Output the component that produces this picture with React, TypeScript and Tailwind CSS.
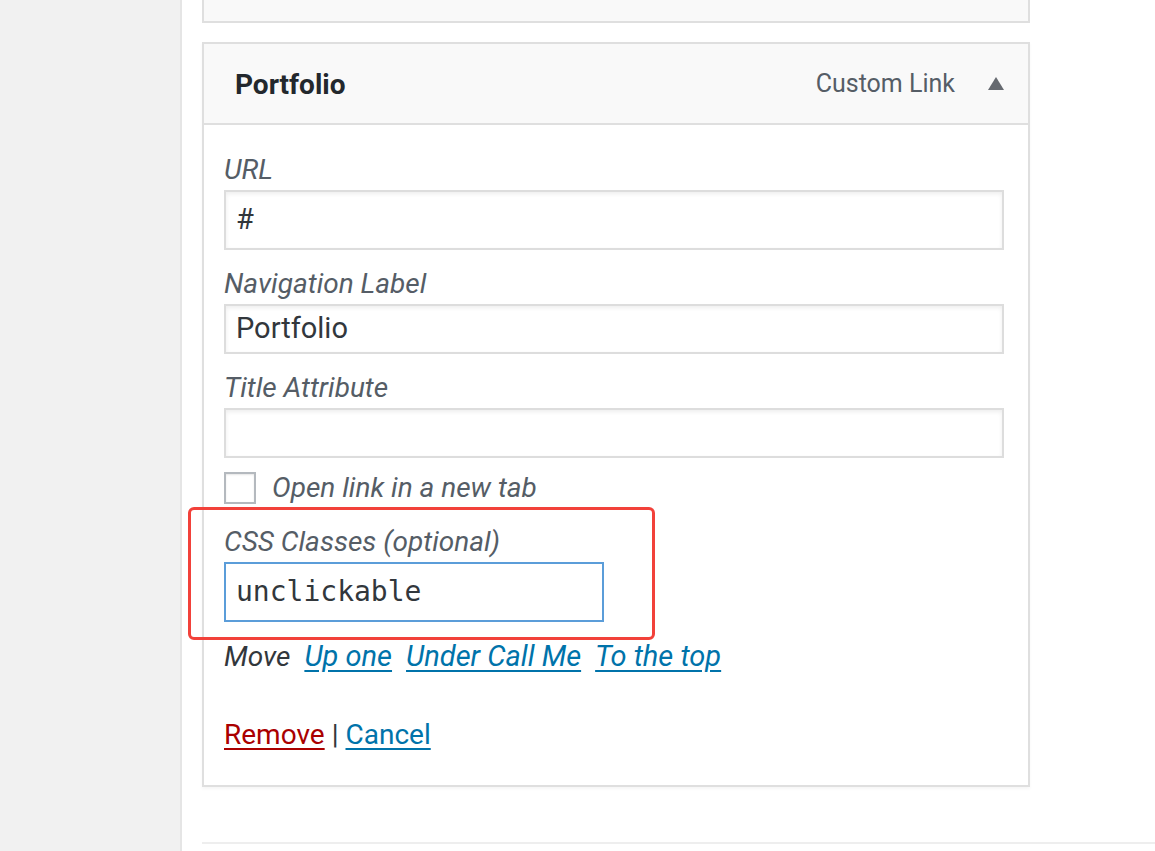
const font = { fontFamily: "Roboto, 'Noto Sans', sans-serif" };

function Field({ label, value, tall }: { label: string; value?: string; tall?: boolean }) {
  return (
    <div>
      <div className="h-[34px] text-[28px] leading-[34px] italic text-[#555d66]">{label}</div>
      <div
        className={`mt-[3px] flex items-center border-2 border-[#dddddd] bg-white px-[10px] text-[29px] text-[#32373c] shadow-[inset_0_2px_4px_rgba(0,0,0,0.07)] ${
          tall ? "h-[60px]" : "h-[50px]"
        }`}
      >
        {value}
      </div>
    </div>
  );
}

export default function App() {
  return (
    <div className="flex h-[851px] w-full overflow-hidden bg-white" style={font}>
      <div className="w-[182px] shrink-0 border-r-2 border-[#e5e5e5] bg-[#f1f1f1]" />
      <div className="flex-1 pl-[20px]">
        <div className="h-[23px] w-[828px] border-2 border-t-0 border-[#dfdfdf] bg-[#f9f9f9]" />

        <div className="relative mt-[19px] w-[828px] border-2 border-[#dfdfdf] bg-white shadow-[0_2px_3px_rgba(0,0,0,0.04)]">
          <div className="flex h-[81px] items-center border-b-2 border-[#dfdfdf] bg-[#f9f9f9] pl-[31px] pr-[24px]">
            <span className="pt-[2px] text-[28px] font-bold text-[#23282d]">Portfolio</span>
            <span className="ml-auto text-[25px] text-[#555d66]">Custom Link</span>
            <svg className="ml-[33px]" width="16" height="13" viewBox="0 0 16 13">
              <path d="M8 0 L16 13 L0 13 Z" fill="#666a70" />
            </svg>
          </div>

          <div className="flex flex-col px-[20px] pt-[28px] pb-[34px]">
            <div className="w-[780px]">
              <Field label="URL" value="#" tall />
            </div>
            <div className="mt-[17px] w-[780px]">
              <Field label="Navigation Label" value="Portfolio" />
            </div>
            <div className="mt-[17px] w-[780px]">
              <Field label="Title Attribute" />
            </div>

            <div className="mt-[14px] flex h-[32px] items-center">
              <div className="h-[32px] w-[32px] border-2 border-[#b4b9be] bg-white shadow-[inset_0_1px_2px_rgba(0,0,0,0.1)]" />
              <span className="ml-[16px] text-[28px] italic text-[#555d66]">Open link in a new tab</span>
            </div>

            <div className="mt-[21px] h-[34px] text-[28px] leading-[34px] italic text-[#555d66]">CSS Classes (optional)</div>
            <div
              className="mt-[3px] flex h-[60px] w-[380px] items-center border-2 border-[#5b9dd9] bg-white px-[10px] text-[28px] text-[#32373c]"
              style={{ fontFamily: "'DejaVu Sans Mono', monospace" }}
            >
              unclickable
            </div>

            <div className="mt-[19px] flex h-[32px] items-center gap-[14px] italic">
              <span className="text-[28px] text-[#32373c]">Move</span>
              <a className="text-[29px] text-[#0073aa] underline underline-offset-[4px]">Up one</a>
              <a className="text-[29px] text-[#0073aa] underline underline-offset-[4px]">Under Call Me</a>
              <a className="text-[29px] text-[#0073aa] underline underline-offset-[4px]">To the top</a>
            </div>

            <div className="mt-[46px] flex h-[32px] items-center text-[28px] text-[#32373c]">
              <a className="text-[#a00] underline underline-offset-[4px]">Remove</a>
              <span className="mx-[7px]">|</span>
              <a className="text-[#0073aa] underline underline-offset-[4px]">Cancel</a>
            </div>
          </div>

          <div className="absolute left-[-16px] top-[463px] h-[133px] w-[467px] rounded-[6px] border-[3px] border-[#f2413a]" />
        </div>

        <div className="mt-[55px] border-t-2 border-[#eeeeee]" />
      </div>
    </div>
  );
}
